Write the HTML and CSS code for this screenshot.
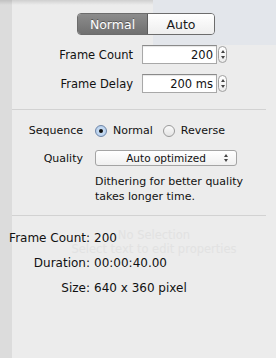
FILE: index.html
```html
<!DOCTYPE html>
<html lang="en">
<head>
    <meta charset="UTF-8">
    <meta name="viewport" content="width=device-width, initial-scale=1.0">
    <title>Export Settings</title>
    <link rel="stylesheet" href="styles.css">
</head>
<body>

    <!-- faded inspector underneath the sheet -->
    <div class="ghost">
        <div class="ghostTile"></div>
        <div class="ghostText">
            <div class="ghostTitle">No Selection</div>
            <div>Select text to edit properties</div>
        </div>
    </div>

    <div class="panel">
        <div class="section top">
            <div class="segmented">
                <span class="segment active">Normal</span>
                <span class="segment">Auto</span>
            </div>

            <div class="formGrid">
                <label for="frameCount">Frame Count</label>
                <div class="field">
                    <input type="text" id="frameCount" value="200">
                    <span class="stepper"><i class="up"></i><i class="down"></i></span>
                </div>
                <label for="frameDelay">Frame Delay</label>
                <div class="field">
                    <input type="text" id="frameDelay" value="200 ms">
                    <span class="stepper"><i class="up"></i><i class="down"></i></span>
                </div>
            </div>
        </div>

        <div class="separator"></div>

        <div class="section options">
            <div class="optRow">
                <span class="optLabel">Sequence</span>
                <div class="radios">
                    <label class="radio"><span class="dot checked"></span>Normal</label>
                    <label class="radio"><span class="dot"></span>Reverse</label>
                </div>
            </div>
            <div class="optRow quality">
                <span class="optLabel">Quality</span>
                <div class="popup">
                    <span>Auto optimized</span>
                    <span class="popupArrows"><i class="up"></i><i class="down"></i></span>
                </div>
            </div>
            <p class="hint">Dithering for better quality<br>takes longer time.</p>
        </div>

        <div class="separator second"></div>

        <div class="section info">
            <span class="infoLabel">Frame Count:</span><span class="infoValue">200</span>
            <span class="infoLabel">Duration:</span><span class="infoValue">00:00:40.00</span>
            <span class="infoLabel">Size:</span><span class="infoValue">640 x 360 pixel</span>
        </div>
    </div>

</body>
</html>
```

FILE: styles.css
```css
body {
    margin: 0;
    height: 358px;
    font-family: 'DejaVu Sans', sans-serif;
    color: #111;
    background:
        linear-gradient(to bottom, rgba(0, 0, 0, 0.12), rgba(0, 0, 0, 0) 5px),
        linear-gradient(to right, #dcdcdc 12px, #ececec 12px);
    position: relative;
    overflow: hidden;
}
.ghost {
    position: absolute;
    inset: 0;
    pointer-events: none;
}
.ghostTile {
    position: absolute;
    top: 0;
    left: 153px;
    width: 123px;
    height: 45px;
    background: #e3e6eb;
}
.ghostText {
    position: absolute;
    top: 228px;
    left: 64px;
    width: 180px;
    text-align: center;
    font-size: 11.5px;
    line-height: 14px;
    color: #e2e2e2;
}
.panel {
    position: relative;
}
.section.top {
    padding-top: 13px;
}
.segmented {
    display: flex;
    width: 138px;
    height: 22px;
    margin-left: 77px;
    box-sizing: border-box;
    border: 1px solid #6c6c6c;
    border-radius: 4px;
    overflow: hidden;
    font-size: 12.5px;
}
.segment {
    flex: 1;
    display: flex;
    align-items: center;
    justify-content: center;
    background: linear-gradient(#ffffff, #eeeeee);
    color: #1a1a1a;
}
.segment.active {
    flex: 0 0 69px;
    background: linear-gradient(#8c8c8c, #707070);
    color: #fff;
    text-shadow: 0 -1px 0 rgba(0, 0, 0, 0.35);
    border-right: 1px solid #5c5c5c;
}
.formGrid {
    display: grid;
    grid-template-columns: 133px auto;
    column-gap: 9px;
    row-gap: 10px;
    margin-top: 10px;
    align-items: center;
}
.formGrid label {
    text-align: right;
    font-size: 11.5px;
}
.field {
    display: flex;
    align-items: center;
    gap: 1px;
}
.field input {
    width: 75px;
    height: 19px;
    box-sizing: border-box;
    border: 1px solid #a8a8a8;
    border-top-color: #8a8a8a;
    box-shadow: inset 0 1px 1px rgba(0, 0, 0, 0.1);
    padding: 0 3px 0 0;
    text-align: right;
    font-family: 'DejaVu Sans', sans-serif;
    font-size: 11.5px;
    color: #111;
    background: #fff;
    outline: none;
}
.stepper, .popupArrows {
    display: flex;
    flex-direction: column;
    align-items: center;
    justify-content: center;
    gap: 3px;
}
.stepper {
    width: 9px;
    height: 17px;
    box-sizing: border-box;
    border: 1px solid #a0a0a0;
    border-radius: 5px;
    background: linear-gradient(#ffffff, #ececec);
}
.up, .down {
    display: block;
    width: 0;
    height: 0;
    border-left: 2px solid transparent;
    border-right: 2px solid transparent;
}
.up {
    border-bottom: 3px solid #444;
}
.down {
    border-top: 3px solid #444;
}
.separator {
    height: 1px;
    background: #d2d2d2;
    margin: 16px 10px 0 12px;
}
.separator.second {
    margin-top: 11px;
}
.section.options {
    padding-top: 14px;
}
.optRow {
    display: flex;
    align-items: center;
}
.optLabel {
    width: 83px;
    text-align: right;
    font-size: 11px;
    margin-right: 12px;
}
.radios {
    display: flex;
    gap: 10px;
    font-size: 11px;
}
.radio {
    display: flex;
    align-items: center;
    gap: 6px;
}
.dot {
    width: 12px;
    height: 12px;
    box-sizing: border-box;
    border: 1px solid #9a9a9a;
    border-radius: 50%;
    background: linear-gradient(#fafafa, #e4e4e4);
    position: relative;
}
.dot.checked {
    border-color: #6f86a8;
    background: radial-gradient(circle, #d6e6f7, #a9c6e8);
}
.dot.checked::after {
    content: '';
    position: absolute;
    top: 3px;
    left: 3px;
    width: 4px;
    height: 4px;
    border-radius: 50%;
    background: #111;
}
.quality {
    margin-top: 13px;
}
.popup {
    position: relative;
    width: 142px;
    height: 16px;
    box-sizing: border-box;
    border: 1px solid #a4a4a4;
    border-radius: 3px;
    background: linear-gradient(#ffffff, #f0f0f0);
    display: flex;
    align-items: center;
    justify-content: center;
    font-size: 10.5px;
}
.popupArrows {
    position: absolute;
    right: 8px;
    top: 0;
    bottom: 0;
    gap: 2px;
}
.hint {
    margin: 8px 0 0 95px;
    font-size: 11px;
    line-height: 15px;
}
.section.info {
    display: grid;
    grid-template-columns: 90px auto;
    column-gap: 4px;
    row-gap: 11px;
    padding-top: 15px;
    font-size: 12px;
    line-height: 14px;
}
.infoLabel {
    text-align: right;
}
```
